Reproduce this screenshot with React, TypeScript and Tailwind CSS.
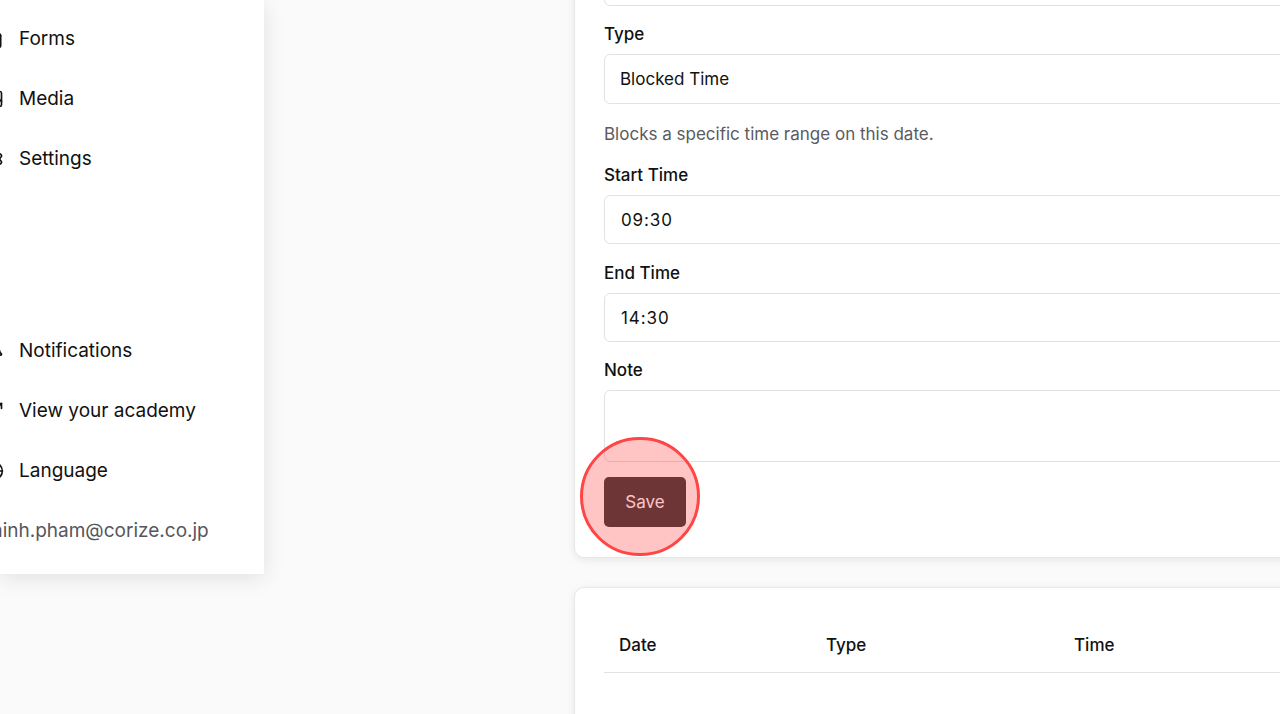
import { Bell, ExternalLink, FileText, Globe, Image, Settings } from "lucide-react";
import type { ComponentType } from "react";

type NavItem = { label: string; icon: ComponentType<{ className?: string }> };

const topNav: NavItem[] = [
  { label: "Forms", icon: FileText },
  { label: "Media", icon: Image },
  { label: "Settings", icon: Settings },
];

const bottomNav: NavItem[] = [
  { label: "Notifications", icon: Bell },
  { label: "View your academy", icon: ExternalLink },
  { label: "Language", icon: Globe },
];

function NavRow({ item }: { item: NavItem }) {
  const Icon = item.icon;
  return (
    <a className="flex h-[60px] items-center gap-[15px] text-[19px] text-[#111]">
      <Icon className="ml-[-35px] h-5 w-5 shrink-0" />
      {item.label}
    </a>
  );
}

function Field({ label, value, mono }: { label: string; value: string; mono?: boolean }) {
  return (
    <div>
      <label className="block h-[24px] text-[17px] leading-[24px] font-medium text-[#111]">{label}</label>
      <div
        className={`mt-[8px] flex h-[49.5px] items-center rounded-[6px] border border-[#e2e2e2] bg-white text-[17px] text-[#111] ${
          mono ? "pl-[16px] pt-[3px] tracking-[0.9px]" : "pl-[15px] pt-[1px]"
        }`}
      >
        {value}
      </div>
    </div>
  );
}

export default function App() {
  return (
    <div className="flex h-[714px] w-[1280px] items-start overflow-hidden bg-[#fafafa] font-['Inter',sans-serif]">
      <aside className="flex h-[574px] w-[264px] shrink-0 flex-col bg-white pl-[19px] pt-[9px] shadow-[0_4px_20px_rgba(0,0,0,0.1)]">
        {topNav.map((item) => (
          <NavRow key={item.label} item={item} />
        ))}
        <div className="h-[132px]" />
        {bottomNav.map((item) => (
          <NavRow key={item.label} item={item} />
        ))}
        <p className="ml-[-33px] flex h-[60px] items-center text-[19px] whitespace-nowrap text-[#55565c]">
          minh.pham@corize.co.jp
        </p>
      </aside>

      <main className="ml-[310px] flex w-[900px] shrink-0 flex-col gap-[29px]">
        <section className="relative mt-[-40px] h-[598px] rounded-[10px] border border-[#e8e8e8] bg-white pl-[29px] shadow-[0_2px_8px_rgba(0,0,0,0.08)]">
          <div className="h-[45px] rounded-[6px] border border-[#e2e2e2]" />
          <div className="mt-[16px]">
            <Field label="Type" value="Blocked Time" />
          </div>
          <p className="mt-[18.5px] h-[24px] text-[17px] leading-[24px] text-[#5a5b61]">
            Blocks a specific time range on this date.
          </p>
          <div className="mt-[16.5px]">
            <Field label="Start Time" value="09:30" mono />
          </div>
          <div className="mt-[16.5px]">
            <Field label="End Time" value="14:30" mono />
          </div>
          <div className="mt-[16px]">
            <label className="block h-[24px] text-[17px] leading-[24px] font-medium text-[#111]">Note</label>
            <div className="mt-[8px] h-[71.5px] rounded-[6px] border border-[#e2e2e2]" />
          </div>
          <button className="mt-[15px] h-[50px] w-[82px] rounded-[5px] bg-[#424547] pt-[3px] text-[17px] text-white">
            Save
          </button>
          <div className="absolute left-[5.3px] top-[476px] h-[119.4px] w-[119.4px] rounded-full border-[3px] border-[#ff4545] bg-[rgba(255,0,0,0.23)]" />
        </section>

        <section className="rounded-[10px] border border-[#e8e8e8] bg-white pl-[29px] pt-[27px] shadow-[0_2px_8px_rgba(0,0,0,0.08)]">
          <div className="flex h-[58px] items-center border-b border-[#e2e2e2] pl-[15px] pt-[4px] text-[17px] font-medium text-[#111]">
            <span className="w-[207px]">Date</span>
            <span className="w-[248px]">Type</span>
            <span>Time</span>
          </div>
          <div className="h-[60px]" />
        </section>
      </main>
    </div>
  );
}
